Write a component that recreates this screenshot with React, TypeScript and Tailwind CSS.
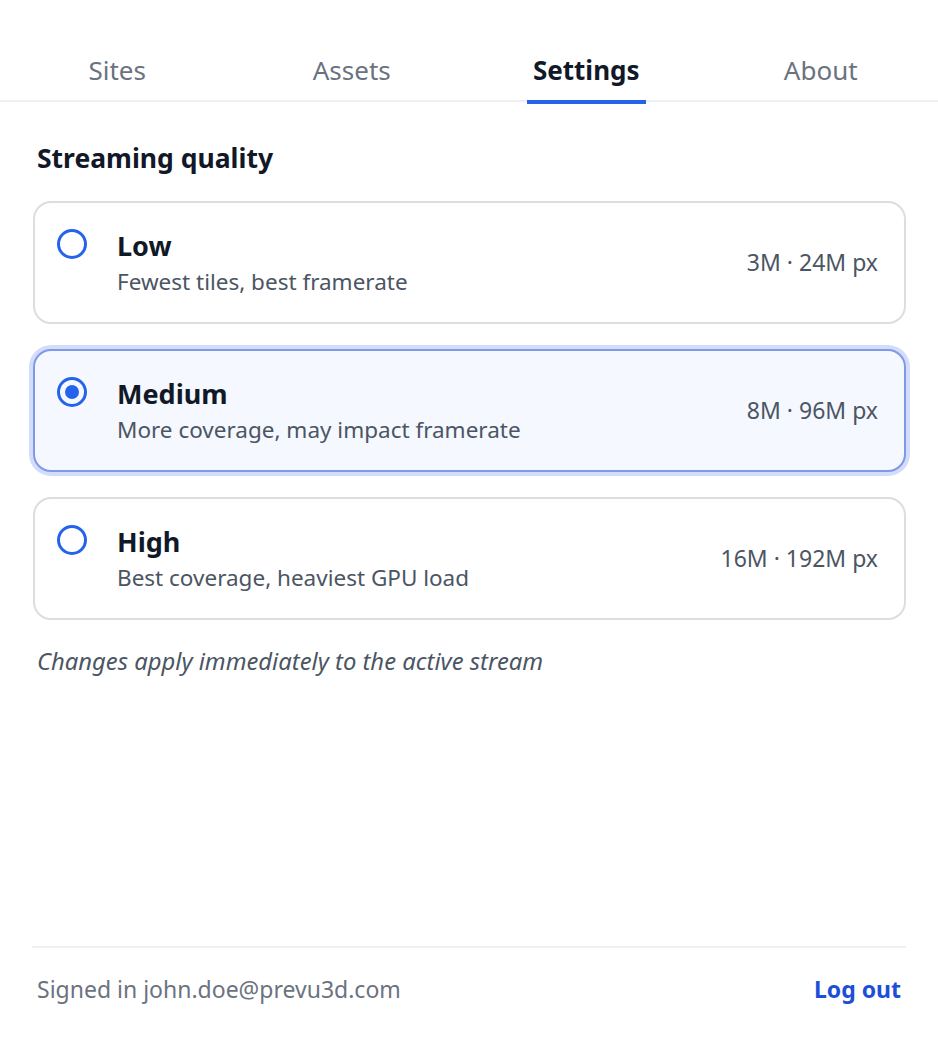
import { useState } from "react";

const tabs = ["Sites", "Assets", "Settings", "About"];

const options = [
  { id: "low", title: "Low", desc: "Fewest tiles, best framerate", meta: "3M · 24M px" },
  { id: "medium", title: "Medium", desc: "More coverage, may impact framerate", meta: "8M · 96M px" },
  { id: "high", title: "High", desc: "Best coverage, heaviest GPU load", meta: "16M · 192M px" },
];

export default function App() {
  const [active, setActive] = useState("Settings");
  const [quality, setQuality] = useState("medium");

  return (
    <div
      className="min-h-screen flex flex-col bg-white"
      style={{ fontFamily: '"Noto Sans", "Open Sans", sans-serif' }}
    >
      <nav className="grid grid-cols-4 border-b-2 border-[#eef0f3]">
        {tabs.map((t) => (
          <button
            key={t}
            onClick={() => setActive(t)}
            className="flex justify-center pt-[52px] pb-[12px]"
          >
            <span
              className={
                "relative text-[26px] leading-[36px] " +
                (active === t ? "font-bold text-[#111827]" : "text-[#6b7280]")
              }
            >
              {t}
              {active === t && (
                <span className="absolute left-[-6px] right-[-6px] bottom-[-16px] h-[4px] bg-[#2563eb]" />
              )}
            </span>
          </button>
        ))}
      </nav>

      <main className="pl-[33px] pr-[32px] pt-[40px]">
        <h2 className="pl-[4px] text-[26.5px] leading-[32px] font-bold text-[#111827]">
          Streaming quality
        </h2>

        <div className="mt-[27px] flex flex-col gap-[25px]">
          {options.map((o) => {
            const on = quality === o.id;
            return (
              <button
                key={o.id}
                onClick={() => setQuality(o.id)}
                className={
                  "h-[123px] flex items-center text-left rounded-[18px] border-2 pl-[22px] pr-[26px] " +
                  (on
                    ? "bg-[#f5f8ff] border-[#8099e6] shadow-[0_0_0_4px_#d3ddfb]"
                    : "bg-white border-[#dcdde0]")
                }
              >
                <div className="self-start mt-[26px] w-[30px] h-[30px] rounded-full border-[3px] border-[#2563eb] flex items-center justify-center shrink-0">
                  {on && <div className="w-[14px] h-[14px] rounded-full bg-[#2563eb]" />}
                </div>
                <div className="ml-[30px] flex-1">
                  <div className="text-[27px] leading-[36px] font-bold text-[#111827]">{o.title}</div>
                  <div className="mt-[2px] text-[22.5px] leading-[32px] text-[#4b5563]">{o.desc}</div>
                </div>
                <div className="text-[23px] text-[#4b5563] whitespace-nowrap">{o.meta}</div>
              </button>
            );
          })}
        </div>

        <p className="mt-[26px] pl-[4px] text-[23.8px] leading-[30px] italic text-[#4b5563]">
          Changes apply immediately to the active stream
        </p>
      </main>

      <footer className="mt-auto mx-[32px] border-t-2 border-[#eef0f3] pt-[26px] pb-[36px] px-[5px] flex items-center justify-between">
        <span className="text-[23px] leading-[30px] text-[#6b7280]">Signed in john.doe@prevu3d.com</span>
        <button className="text-[23px] leading-[30px] font-bold text-[#1d4ed8]">Log out</button>
      </footer>
    </div>
  );
}
